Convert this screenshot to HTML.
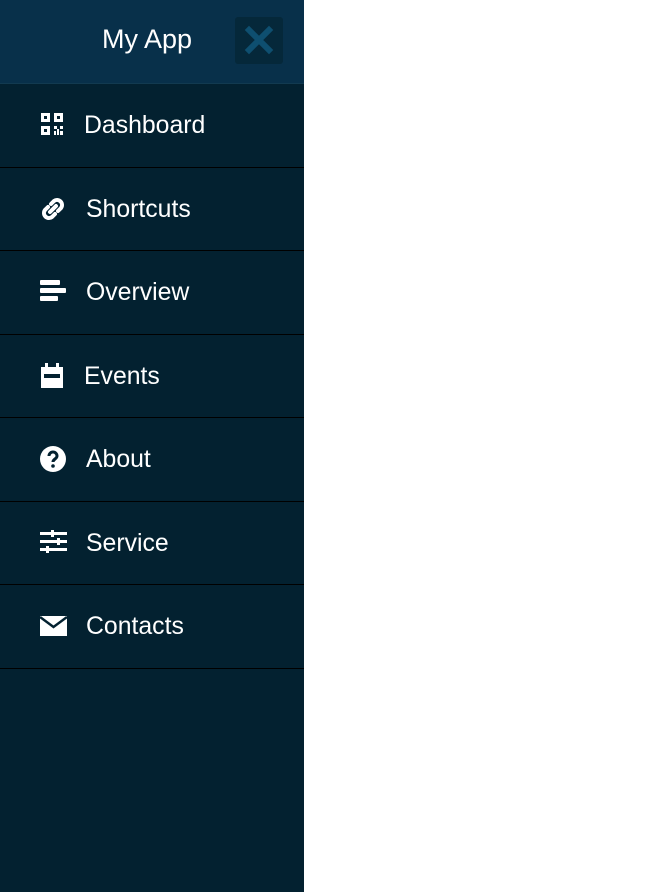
<!DOCTYPE html>
<html><head><style>
body{margin:0;width:648px;height:892px;background:#fff;font-family:"Liberation Sans",sans-serif;overflow:hidden}
.side{position:absolute;left:0;top:0;width:304px;height:892px;background:#032130}
.hdr{height:83px;background:#08304a;border-bottom:1px solid #123a50;position:relative}
.hdr .t{position:absolute;left:102px;top:24px;color:#fff;font-size:27px}
.cb{position:absolute;left:235px;top:17px;width:48px;height:47px;background:#05283a;border-radius:3px}
.item{height:82.5px;border-bottom:1px solid #000;position:relative;color:#fff;font-size:24.8px}
.item svg{position:absolute;left:40px;top:28px}
.item span{position:absolute;top:28px}
</style></head><body>
<div class="side">
<div class="hdr"><div class="t">My App</div>
<div class="cb"><svg width="48" height="47" viewBox="0 0 48 47"><path d="M14 13L34 33M34 13L14 33" stroke="#0e4f70" stroke-width="6" stroke-linecap="square"/></svg></div></div>
<div class="item"><svg width="24" height="24" viewBox="0 0 24 24" fill="#fff"><path d="M1 1h9v9H1zM4 4v3h3V4zM14 1h9v9H14zM17 4v3h3V4zM1 14h9v9H1zM4 17v3h3v-3zM14 14h3v3h-3zM17 17h2v6h-2zM20 19h3v4h-3zM14 19h2v4h-2zM20 14h3v3h-3z" fill-rule="evenodd"/></svg><span style="left:84px">Dashboard</span></div>
<div class="item"><svg width="26" height="26" viewBox="0 0 26 26"><path d="M11 8l3-3a5 5 0 017 7l-3 3M15 18l-3 3a5 5 0 01-7-7l3-3M10 16l6-6" stroke="#fff" stroke-width="4" fill="none" stroke-linecap="round"/></svg><span style="left:86px">Shortcuts</span></div>
<div class="item"><svg width="26" height="24" viewBox="0 0 26 24" fill="#fff"><rect x="0" y="1" width="20" height="5" rx="1"/><rect x="0" y="9" width="26" height="5" rx="1"/><rect x="0" y="17" width="18" height="5" rx="1"/></svg><span style="left:86px">Overview</span></div>
<div class="item"><svg width="24" height="26" viewBox="0 0 24 26" fill="#fff"><rect x="5" y="0" width="3" height="5"/><rect x="16" y="0" width="3" height="5"/><path d="M1 4h22v21H1zM4 11v4h16v-4z" fill-rule="evenodd"/></svg><span style="left:84px">Events</span></div>
<div class="item"><svg width="26" height="26" viewBox="0 0 26 26"><circle cx="13" cy="13" r="13" fill="#fff"/><path d="M9 10a4 4 0 118 0c0 3-4 3-4 6" stroke="#032130" stroke-width="3" fill="none"/><circle cx="13" cy="20" r="1.8" fill="#032130"/></svg><span style="left:86px">About</span></div>
<div class="item"><svg width="27" height="24" viewBox="0 0 27 24" fill="#fff"><rect x="0" y="2" width="27" height="3"/><rect x="0" y="10" width="27" height="3"/><rect x="0" y="18" width="27" height="3"/><rect x="11" y="0" width="3" height="7"/><rect x="17" y="8" width="3" height="7"/><rect x="6" y="16" width="3" height="7"/></svg><span style="left:86px">Service</span></div>
<div class="item"><svg width="27" height="20" viewBox="0 0 27 20" style="top:31px"><path d="M0 0h27v20H0z" fill="#fff"/><path d="M0 1l13.5 10L27 1" stroke="#032130" stroke-width="2.5" fill="none"/></svg><span style="left:86px">Contacts</span></div>
</div>
</body></html>
